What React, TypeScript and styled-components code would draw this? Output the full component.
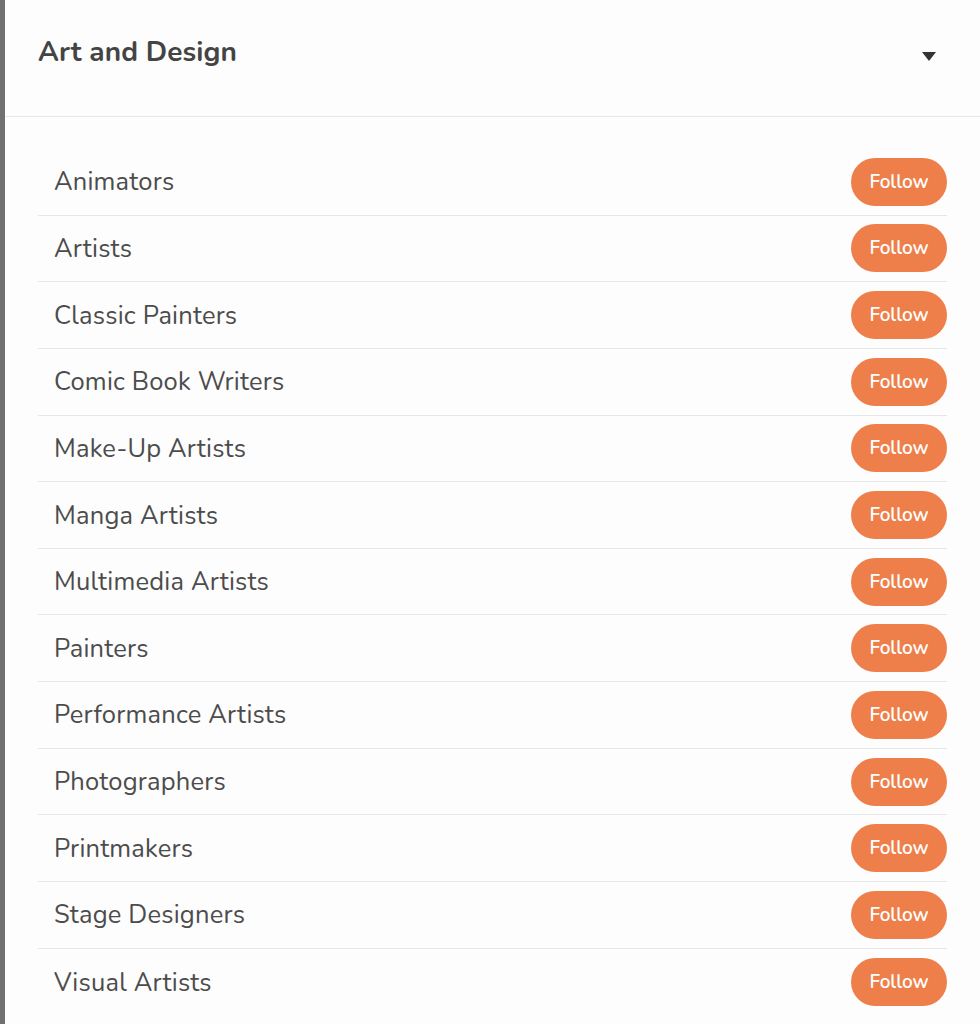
import React from "react";
import styled, { createGlobalStyle } from "styled-components";

const GlobalStyle = createGlobalStyle`
  body {
    margin: 0;
    background: #fdfdfd;
    font-family: "Nunito", Lato, "Open Sans", sans-serif;
  }
`

const Page = styled.div`
  display: flex;
  min-height: 1024px;
`

const SideEdge = styled.div`
  width: 5px;
  flex-shrink: 0;
  background-color: #707070;
`

const Panel = styled.div`
  flex: 1;
  background-color: #fdfdfd;
`

const Header = styled.div`
  height: 117px;
  box-sizing: border-box;
  display: flex;
  align-items: flex-start;
  justify-content: space-between;
  padding: 33px 44px 0 33px;
  border-bottom: 1px solid #e8e8e8;
`

const Title = styled.h2`
  margin: 0;
  font-size: 28px;
  font-weight: 700;
  color: #444;
  letter-spacing: 0.1px;
`

const Caret = styled.span`
  margin-top: 19px;
  width: 0;
  height: 0;
  border-left: 7px solid transparent;
  border-right: 7px solid transparent;
  border-top: 9px solid #333;
`

const List = styled.div`
  padding: 32px 33px 0 33px;
`

const Row = styled.div`
  height: 66.65px;
  box-sizing: border-box;
  display: flex;
  align-items: center;
  justify-content: space-between;
  padding-left: 16px;
  border-bottom: 1px solid #e6e6e6;

  &:last-child {
    border-bottom: none;
  }
`

const Name = styled.span`
  font-size: 25.5px;
  color: #4c4c4c;
  letter-spacing: 0.2px;
`

const FollowButton = styled.button`
  width: 96px;
  height: 48px;
  border: none;
  border-radius: 24px;
  background-color: #ee7f4b;
  color: #fff;
  font-family: inherit;
  font-size: 19px;
  font-weight: 600;
  cursor: pointer;
`

const topics = [
    'Animators',
    'Artists',
    'Classic Painters',
    'Comic Book Writers',
    'Make-Up Artists',
    'Manga Artists',
    'Multimedia Artists',
    'Painters',
    'Performance Artists',
    'Photographers',
    'Printmakers',
    'Stage Designers',
    'Visual Artists',
]

const App = () => {
    return (
        <>
            <GlobalStyle/>
            <Page>
                <SideEdge/>
                <Panel>
                    <Header>
                        <Title>Art and Design</Title>
                        <Caret/>
                    </Header>
                    <List>
                        {topics.map(t => (
                            <Row key={t}>
                                <Name>{t}</Name>
                                <FollowButton>Follow</FollowButton>
                            </Row>
                        ))}
                    </List>
                </Panel>
            </Page>
        </>
    )
}

export default App
